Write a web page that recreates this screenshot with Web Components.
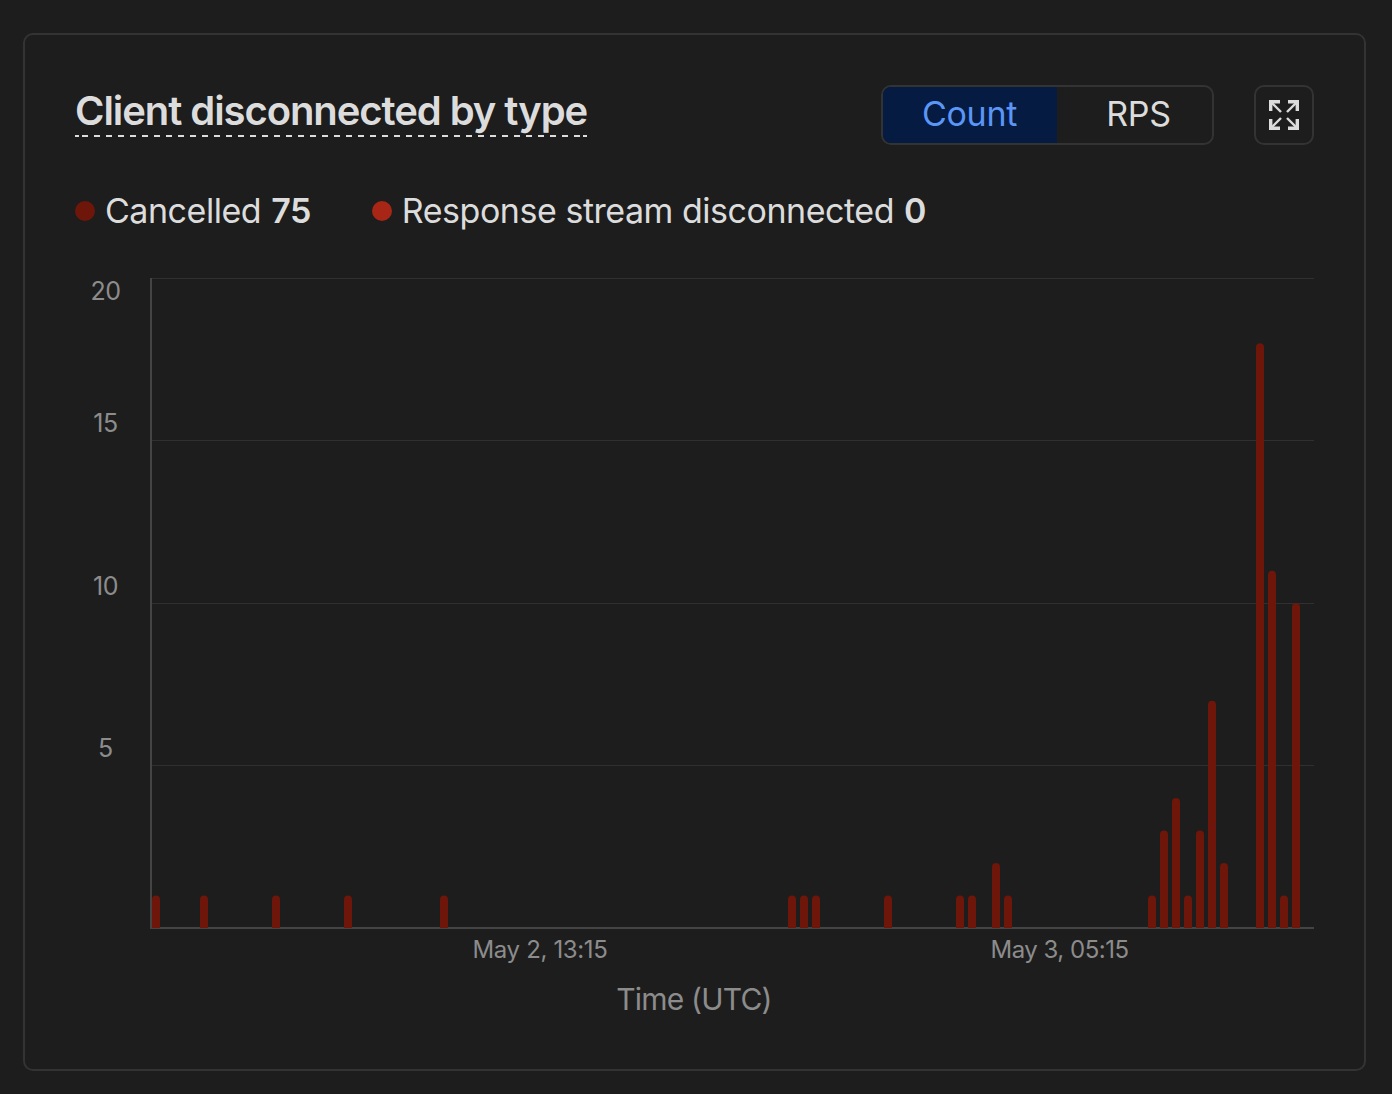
<!DOCTYPE html>
<html>
<head>
<style>
  html, body { margin: 0; background: #1d1d1d; }
  body { font-family: 'Inter', 'Liberation Sans', sans-serif; color: #dcdcdc; }
</style>
</head>
<body>

<template id="chart-card">
  <style>
    :host {
      display: block;
      box-sizing: border-box;
      width: 1343px;
      height: 1038px;
      margin: 33px 0 0 23px;
      padding: 50px 50px 0 51px;
      border: 2px solid #333333;
      border-radius: 10px;
    }
    header {
      display: flex;
      align-items: flex-start;
      height: 60px;
    }
    ::slotted([slot="title"]) {
      flex: 1;
    }
    .actions {
      display: flex;
      gap: 40px;
    }
  </style>
  <header>
    <slot name="title"></slot>
    <div class="actions"><slot name="actions"></slot></div>
  </header>
  <slot></slot>
</template>

<template id="card-title">
  <style>
    :host { display: block; margin-left: -1px; padding-top: 3px; }
    span {
      display: inline-block;
      font-size: 40px;
      font-weight: 600;
      line-height: 45px;
      letter-spacing: -1.07px;
      color: #dcdcdc;
      padding-bottom: 4px;
      /* dashes: short end pieces, 6 on / 6 off in between */
      background:
        linear-gradient(#dcdcdc, #dcdcdc) 0 100% / 4px 2px no-repeat,
        linear-gradient(#dcdcdc, #dcdcdc) 100% 100% / 4px 2px no-repeat,
        repeating-linear-gradient(90deg, #dcdcdc 0 6px, transparent 6px 12px) 7px 100% / calc(100% - 14px) 2px no-repeat;
    }
  </style>
  <span><slot></slot></span>
</template>

<template id="seg-toggle">
  <style>
    :host {
      display: flex;
      box-sizing: border-box;
      width: 333px;
      height: 60px;
      border: 2px solid #333333;
      border-radius: 10px;
      overflow: hidden;
      font-size: 34px;
      letter-spacing: -0.3px;
      line-height: 53px;
    }
    div {
      box-sizing: border-box;
      text-align: center;
      color: #dcdcdc;
    }
    .on {
      width: 174px;
      padding-right: 1px;
      background: #051b41;
      color: #5b96f7;
    }
    .off { flex: 1; padding-left: 8px; }
  </style>
  <div class="on">Count</div>
  <div class="off">RPS</div>
</template>

<template id="icon-button">
  <style>
    :host {
      display: flex;
      align-items: center;
      justify-content: center;
      box-sizing: border-box;
      width: 60px;
      height: 60px;
      border: 2px solid #333333;
      border-radius: 10px;
    }
    svg { display: block; }
  </style>
  <svg width="32" height="32" viewBox="0 0 32 32" fill="none" stroke="#dcdcdc">
    <path stroke-width="3.4" d="M2.7 12V2.7H12"/>
    <path stroke-width="2.4" d="M3 3L13 13"/>
    <path stroke-width="3.4" d="M29.3 12V2.7H20"/>
    <path stroke-width="2.4" d="M29 3L19 13"/>
    <path stroke-width="3.4" d="M2.7 20V29.3H12"/>
    <path stroke-width="2.4" d="M3 29L13 19"/>
    <path stroke-width="3.4" d="M29.3 20V29.3H20"/>
    <path stroke-width="2.4" d="M29 29L19 19"/>
  </svg>
</template>

<template id="legend-row">
  <style>
    :host {
      display: flex;
      gap: 61px;
      margin-top: 44px;
      margin-left: -1px;
      height: 44px;
      align-items: center;
    }
  </style>
  <slot></slot>
</template>

<template id="legend-item">
  <style>
    :host {
      display: flex;
      align-items: center;
      gap: 10px;
      font-size: 34px;
      letter-spacing: -0.47px;
      line-height: 44px;
      color: #dcdcdc;
    }
    i {
      width: 20px;
      height: 20px;
      border-radius: 50%;
      background: var(--dot);
    }
    b { font-weight: 600; margin-left: 10px; }
  </style>
  <i></i>
  <span><slot></slot><b id="value"></b></span>
</template>

<template id="bar-chart">
  <style>
    :host { display: block; margin-top: 43px; margin-left: -51px; }
    svg { display: block; }
    text { font-family: 'Inter', 'Liberation Sans', sans-serif; fill: #8c8c8c; }
  </style>
  <svg width="1339" height="760" viewBox="0 0 1339 760"></svg>
</template>

<chart-card>
  <card-title slot="title">Client disconnected by type</card-title>
  <seg-toggle slot="actions"></seg-toggle>
  <icon-button slot="actions"></icon-button>
  <legend-row>
    <legend-item color="#6e1609" value="75">Cancelled</legend-item>
    <legend-item color="#a72616" value="0">Response stream disconnected</legend-item>
  </legend-row>
  <bar-chart></bar-chart>
</chart-card>

<script>
  // Small helper: every element here just stamps its template into an open shadow root.
  class Stamped extends HTMLElement {
    constructor() {
      super();
      const template = document.querySelector('#' + this.localName);
      this.attachShadow({ mode: 'open' }).appendChild(document.importNode(template.content, true));
    }
  }

  customElements.define('chart-card', class extends Stamped {});
  customElements.define('card-title', class extends Stamped {});
  customElements.define('seg-toggle', class extends Stamped {});
  customElements.define('icon-button', class extends Stamped {});
  customElements.define('legend-row', class extends Stamped {});

  customElements.define('legend-item', class extends Stamped {
    connectedCallback() {
      this.style.setProperty('--dot', this.getAttribute('color'));
      this.shadowRoot.getElementById('value').textContent = this.getAttribute('value');
    }
  });

  customElements.define('bar-chart', class extends Stamped {
    connectedCallback() {
      // [left edge, count] in page pixels
      const bars = [
        [152, 1], [200, 1], [272, 1], [344, 1], [440, 1], [788, 1], [800, 1], [812, 1],
        [884, 1], [956, 1], [968, 1], [992, 2], [1004, 1], [1148, 1], [1160, 3], [1172, 4],
        [1184, 1], [1196, 3], [1208, 7], [1220, 2], [1256, 18], [1268, 11], [1280, 1], [1292, 10]
      ];
      const ox = 25, oy = 276;   // svg origin on the page
      const base = 928, unit = 32.48;
      let out = '';

      for (const y of [278, 440, 603, 765]) {
        out += `<rect x="${150 - ox}" y="${y - oy}" width="${1314 - 150}" height="1" fill="#303030"/>`;
      }
      out += `<rect x="${150 - ox}" y="${278 - oy}" width="2" height="${650}" fill="#444444"/>`;
      out += `<rect x="${150 - ox}" y="${927 - oy}" width="${1314 - 150}" height="2" fill="#444444"/>`;

      for (const [x, n] of bars) {
        const top = base - n * unit;
        out += `<path d="M${x - ox} ${base - oy}V${top + 4 - oy}a4 4 0 0 1 8 0V${base - oy}Z" fill="#6e1609"/>`;
      }

      const labels = [['20', 105.5, 300], ['15', 105.5, 432], ['10', 105.5, 595], ['5', 105.5, 757]];
      for (const [t, x, y] of labels) {
        out += `<text x="${x - ox}" y="${y - oy}" font-size="25" letter-spacing="-0.4" text-anchor="middle">${t}</text>`;
      }
      out += `<text x="${540 - ox}" y="${958 - oy}" font-size="24" letter-spacing="-0.35" text-anchor="middle">May 2, 13:15</text>`;
      out += `<text x="${1059.5 - ox}" y="${958 - oy}" font-size="24" letter-spacing="-0.5" text-anchor="middle">May 3, 05:15</text>`;
      out += `<text x="${694 - ox}" y="${1010 - oy}" font-size="30" letter-spacing="-0.8" text-anchor="middle">Time (UTC)</text>`;

      this.shadowRoot.querySelector('svg').innerHTML = out;
    }
  });
</script>
</body>
</html>
